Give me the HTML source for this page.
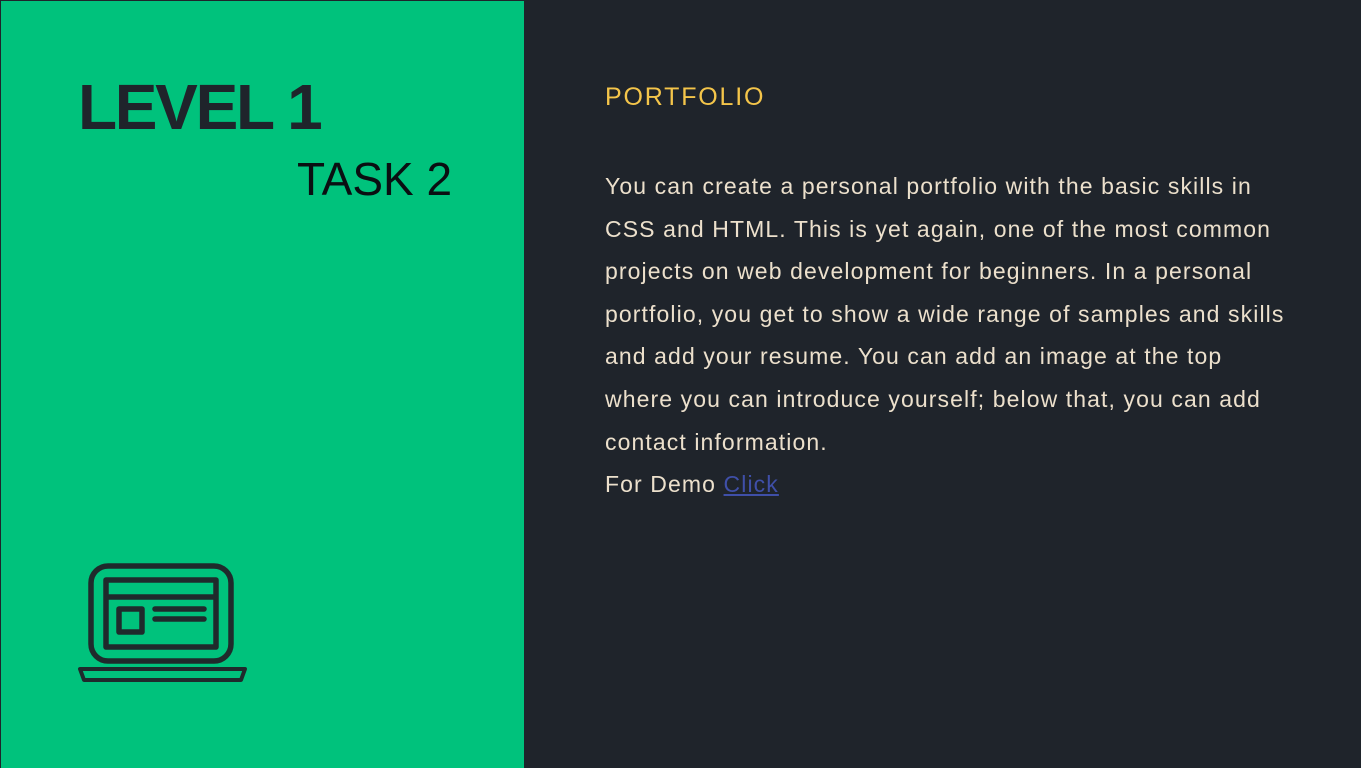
<!DOCTYPE html>
<html><head><style>
html,body{margin:0;padding:0;}
body{width:1361px;height:768px;background:#1f242b;position:relative;overflow:hidden;font-family:"Liberation Sans",sans-serif;}
.left{position:absolute;left:1px;top:1px;width:523px;height:767px;background:#00c27c;}
.l1{position:absolute;left:77px;top:66px;font-size:64px;font-weight:bold;color:#1f242b;letter-spacing:-2.3px;line-height:80px;}
.t2{position:absolute;left:296px;top:148px;font-size:46px;color:#0a0f12;line-height:60px;}
.h{position:absolute;left:605px;top:82px;color:#f4c54a;font-size:25px;letter-spacing:1.8px;line-height:30px;}
.p{position:absolute;left:605px;top:165px;width:740px;color:#ece0cc;font-size:23px;line-height:42.6px;letter-spacing:1.1px;white-space:nowrap;}
.p a{color:#3f4fa8;text-decoration:underline;}
</style></head><body>
<div class="left">
<div class="l1">LEVEL 1</div>
<div class="t2">TASK 2</div>
<svg style="position:absolute;left:0;top:0" width="523" height="767" viewBox="1 1 523 767">
<g fill="none" stroke="#1f2a2c" stroke-width="5.5" stroke-linejoin="round">
<rect x="91" y="566" width="140" height="95" rx="17"/>
<rect x="106" y="580" width="110" height="67"/>
<line x1="106" y1="597" x2="216" y2="597"/>
<rect x="119" y="609" width="23" height="23"/>
<line x1="155" y1="609" x2="204" y2="609" stroke-linecap="round"/>
<line x1="155" y1="619" x2="204" y2="619" stroke-linecap="round"/>
<path d="M80 669 L245 669 L241 680 L84 680 Z" stroke-width="4"/>
</g></svg>
</div>
<div class="h">PORTFOLIO</div>
<div class="p">You can create a personal portfolio with the basic skills in<br>CSS and HTML. This is yet again, one of the most common<br>projects on web development for beginners. In a personal<br>portfolio, you get to show a wide range of samples and skills<br>and add your resume. You can add an image at the top<br>where you can introduce yourself; below that, you can add<br>contact information.<br>For Demo <a>Click</a></div>
</body></html>
